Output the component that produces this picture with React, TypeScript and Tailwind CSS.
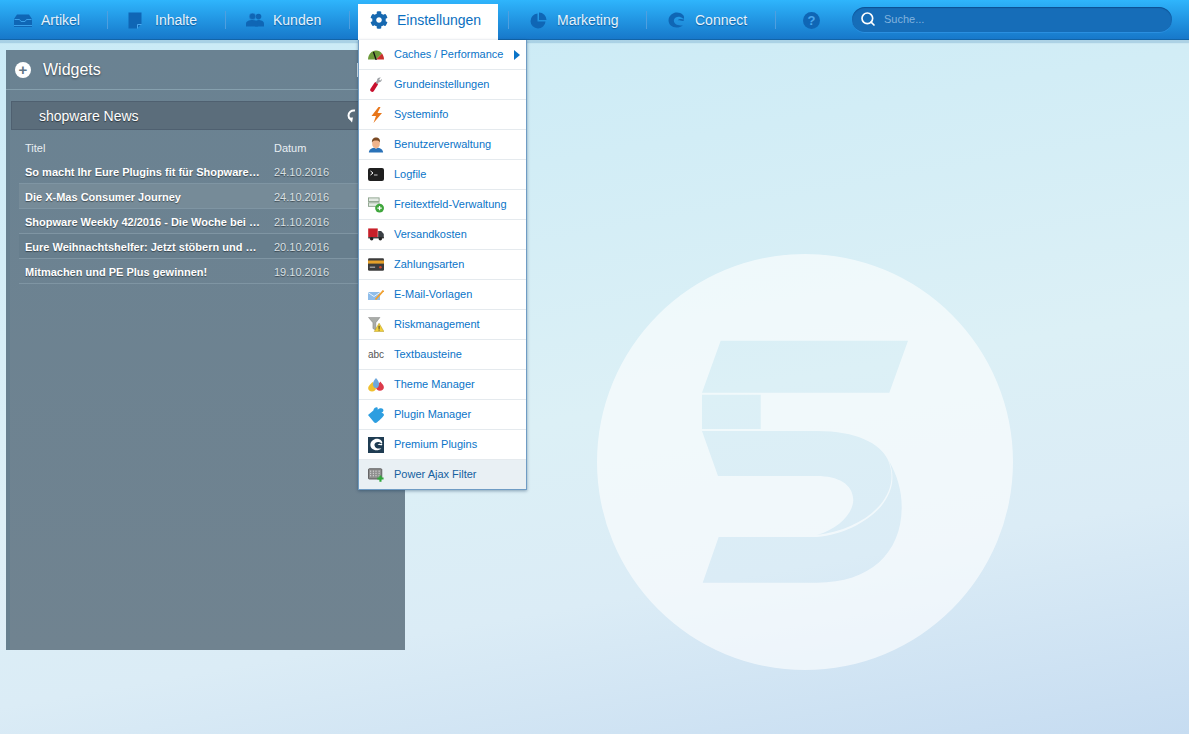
import { FaCog } from 'react-icons/fa';
import { Search } from 'lucide-react';

function TrayIcon() {
  return (
    <svg width="18" height="13" viewBox="0 0 18 13">
      <path d="M3 0.5H15L18 5V13H0V5Z" fill="#0f66b5" />
      <path d="M0.5 5.5H5.5L7 7.5H11L12.5 5.5H17.5" fill="none" stroke="#3aa0ea" strokeWidth="1" />
      <path d="M0 11.5H18" stroke="#3aa0ea" strokeWidth="1" />
    </svg>
  );
}

function DocIcon() {
  return (
    <svg width="14" height="17" viewBox="0 0 14 17">
      <path d="M0.5 0.5H13.5V12L9 16.5H0.5Z" fill="#0f66b5" />
      <path d="M13.5 12.5H9.5V16.5" fill="none" stroke="#4aa8ee" strokeWidth="1" />
    </svg>
  );
}

function PeopleIcon() {
  return (
    <svg width="18" height="14" viewBox="0 0 18 14">
      <circle cx="12.5" cy="3.6" r="2.8" fill="#0f66b5" />
      <path d="M9 13.5V10C9 8 11 7 12.5 7C14.5 7 18 8 18 10.5V13.5Z" fill="#0f66b5" />
      <circle cx="6.5" cy="3.4" r="3.2" fill="#0f66b5" stroke="#2a8ad8" strokeWidth="0.5" />
      <path d="M0 13.5V10.5C0 8.2 3 7 6.5 7C10 7 12 8.2 12 10.5V13.5Z" fill="#0f66b5" />
    </svg>
  );
}

function PieIcon() {
  return (
    <svg width="17" height="17" viewBox="0 0 17 17">
      <path d="M7.5 1.5A7.5 7.5 0 1 0 15.5 9.5H7.5Z" fill="#0f66b5" />
      <path d="M9 0.5A7.5 7.5 0 0 1 16.5 8H9Z" fill="#0f66b5" />
    </svg>
  );
}

const swirlPath =
  'M15 3C12.5 0.5 9 0 6 1C2.5 2.3 0.5 5 0.5 8.3C0.5 12.5 4 15.5 8.5 15.5C11 15.5 13.2 14.7 15 13.2C12.5 13.6 9 13.5 7 11.5C5.2 9.5 5.5 6.8 7.7 5.5C9.5 4.5 12.5 4.5 15 6.6C16.5 7.6 16.5 9 14.5 9C12.5 9 11 8 9.5 8.5C11 6.5 14 6.6 15.5 7.5C16.5 5.5 16 4 15 3Z';

function SwirlIcon() {
  return (
    <svg width="17" height="16" viewBox="0 0 17 16">
      <path d={swirlPath} fill="#0f66b5" />
    </svg>
  );
}

function HelpIcon() {
  return (
    <span className="flex h-[17px] w-[17px] items-center justify-center rounded-full bg-[#0f66b5] text-[13px] font-bold leading-none text-[#4aa8ee]">
      ?
    </span>
  );
}

const navItems = [
  { label: 'Artikel', icon: <TrayIcon />, box: 'w-[107px] pl-[14px]' },
  { label: 'Inhalte', icon: <DocIcon />, box: 'w-[117px] pl-[20px]' },
  { label: 'Kunden', icon: <PeopleIcon />, box: 'w-[123px] pl-[20px]' },
];

const navItemsRight = [
  { label: 'Marketing', icon: <PieIcon />, box: 'w-[137px] pl-[21px]' },
  { label: 'Connect', icon: <SwirlIcon />, box: 'w-[128px] pl-[21px]' },
];

function Separator() {
  return <span className="h-[18px] w-px shrink-0 bg-[#4f9fdf]" />;
}

function NavLink({ label, icon, box }: { label: string; icon: React.ReactNode; box: string }) {
  return (
    <a className={`flex h-full shrink-0 items-center pt-px ${box}`}>
      <span className="flex w-[27px] items-center">{icon}</span>
      <span className="text-[14px] text-[#e6f3fc] [text-shadow:0_1px_1px_rgba(0,60,120,0.6)]">{label}</span>
    </a>
  );
}

const GaugeIcon = (
  <svg width="16" height="10" viewBox="0 0 16 10">
    <path d="M0 9.5C0 4.5 3.5 0.5 8 0.5C10.5 0.5 12.5 1.6 14 3.4L8 9.5Z" fill="#6d9a3a" />
    <path d="M14 3.4C15.2 5 16 7 16 9.5H8Z" fill="#c9302c" />
    <path d="M5.5 2L8.2 10" stroke="#111" strokeWidth="1.3" />
  </svg>
);

const WrenchIcon = (
  <svg width="12" height="15" viewBox="0 0 12 15">
    <path d="M2.2 12.8L6 7" stroke="#c8102e" strokeWidth="4" strokeLinecap="round" />
    <path d="M6.5 6.5L8.5 3.5" stroke="#a0a4a8" strokeWidth="2.4" />
    <path d="M7 2.5C7.5 0.8 9.5 0 10.8 0.6L9.2 2.4L10.2 3.6L11.8 2C12.2 4 10.5 5.8 8.4 5Z" fill="#a0a4a8" />
  </svg>
);

const BoltIcon = (
  <svg width="11" height="16" viewBox="0 0 11 16">
    <path d="M7.5 0L0.5 9H5L2.5 16L11 6H6.5L9.5 0Z" fill="#e8761a" />
  </svg>
);

const UserIcon = (
  <svg width="16" height="16" viewBox="0 0 18 18">
    <path d="M1 17.5C1 14 4 12.5 6.5 12L9 13L11.5 12C14 12.5 17 14 17 17.5Z" fill="#2a72b8" />
    <ellipse cx="9" cy="7.5" rx="4.3" ry="5.5" fill="#f0b48c" />
    <path d="M4.5 6.5C4 2.5 6.5 0.5 9 0.5C12 0.5 14 2.5 13.5 6.5C13 4.5 11.5 4 9 4C6.5 4 5 4.5 4.5 6.5Z" fill="#7a4a24" />
  </svg>
);

const TerminalIcon = (
  <svg width="16" height="13" viewBox="0 0 16 13">
    <rect width="16" height="13" rx="2" fill="#1f1f1f" />
    <path d="M2.5 3L5 5L2.5 7" fill="none" stroke="#fff" strokeWidth="1" />
    <path d="M6 7H9.5" stroke="#ccc" strokeWidth="1" />
  </svg>
);

const FieldsIcon = (
  <svg width="17" height="16" viewBox="0 0 18 17">
    <rect x="0.5" y="0.5" width="12" height="4" fill="#e4ebe4" stroke="#8aa08a" />
    <rect x="0.5" y="6" width="12" height="4" fill="#e4ebe4" stroke="#8aa08a" />
    <circle cx="13" cy="12" r="5" fill="#3fa63c" />
    <path d="M13 9.5V14.5M10.5 12H15.5" stroke="#fff" strokeWidth="1.4" />
  </svg>
);

const TruckIcon = (
  <svg width="16" height="13" viewBox="0 0 18 15">
    <rect x="0" y="0.5" width="11" height="10" fill="#c8202a" />
    <path d="M11.5 3.5H15L18 7V11.5H11.5Z" fill="#3a3f44" />
    <rect x="0" y="10.5" width="18" height="1.5" fill="#333" />
    <circle cx="4" cy="12.5" r="2" fill="#222" />
    <circle cx="14" cy="12.5" r="2" fill="#222" />
  </svg>
);

const CardIcon = (
  <svg width="16" height="13" viewBox="0 0 18 14">
    <rect width="18" height="14" rx="1.5" fill="#3c3c3c" />
    <rect y="2.5" width="18" height="3.5" fill="#e5a02a" />
    <path d="M2 10H8" stroke="#ddd" strokeWidth="1" />
    <circle cx="14" cy="10" r="1.4" fill="#d9472b" />
  </svg>
);

const MailIcon = (
  <svg width="16" height="10" viewBox="0 0 16 10">
    <rect x="0" y="2" width="12" height="8" fill="#8fbdea" />
    <path d="M0 2.5L6 6.5L12 2.5" fill="none" stroke="#e6f2fb" strokeWidth="1" />
    <path d="M7.5 9.5L15.5 0.5" stroke="#f0a030" strokeWidth="1.8" />
  </svg>
);

const FunnelIcon = (
  <svg width="16" height="15" viewBox="0 0 18 17">
    <path d="M0.5 0.5H13.5L8.8 6.5V15L5.5 13V6.5Z" fill="#a9aca8" stroke="#777" strokeWidth="0.5" />
    <path d="M12.5 7L18 16.5H7Z" fill="#f3d13c" stroke="#a88a10" strokeWidth="0.5" />
    <path d="M12.5 10V13.5M12.5 14.2V15.4" stroke="#222" strokeWidth="1" />
  </svg>
);

const AbcIcon = <span className="text-[10px] leading-none text-[#555]">abc</span>;

const DropsIcon = (
  <svg width="16" height="14" viewBox="0 0 18 16">
    <path d="M5 4.5C7 7 9 9 9 11.5C9 14 7 15.5 4.5 15.5C2 15.5 0 14 0 11.5C0 9 3 7 5 4.5Z" fill="#f0c030" />
    <path d="M14 4C16 7 18 8 18 10.5C18 13 16 14.5 13.5 14.5C11 14.5 9 13 9 10.5C9 8 12 7 14 4Z" fill="#dc3a4a" />
    <path d="M9 0C11 2.5 12.5 4.5 12.5 7C12.5 9.5 11 11.5 9 11.5C7 11.5 5.5 9.5 5.5 7C5.5 4.5 7 2.5 9 0Z" fill="#6fa8dc" />
  </svg>
);

const PuzzleIcon = (
  <svg width="16" height="16" viewBox="0 0 18 18">
    <path d="M0 9L6 4C6.5 1 9 0 10.5 0.5C11 0.5 11 3 11 3C13 1 16 1 17 2.5C18 4 17 6 15 6.5C16 7 18 7 18 9C18 10 14 14 10 17.5C9 18 8 18 7 17.5Z" fill="#2d9ee0" />
  </svg>
);

const PremiumIcon = (
  <span className="flex h-4 w-4 items-center justify-center bg-[#1f3c52]">
    <svg width="13" height="13" viewBox="0 0 17 16">
      <path d={swirlPath} fill="#fff" />
    </svg>
  </span>
);

const FilterIcon = (
  <svg width="16" height="14" viewBox="0 0 18 15">
    <rect x="0.5" y="0.5" width="15" height="11.5" rx="1" fill="#8f8f8f" stroke="#555" />
    <path d="M3 2.5V10M6 2.5V10M9 2.5V10M12.5 2.5V10" stroke="#e4e4e4" strokeWidth="1" strokeDasharray="1.5 1" />
    <path d="M14 8V15M10.5 11.5H17.5" stroke="#2fa83a" strokeWidth="2.4" />
  </svg>
);

function RefreshIcon() {
  return (
    <svg width="16" height="14" viewBox="0 0 16 14" className="ml-auto">
      <path d="M8 1.5C4 1 1.5 3.5 1.5 6.5C1.5 8 2 9.2 3.2 10" fill="none" stroke="#fff" strokeWidth="2" />
      <path d="M1 8.8L6 8.5L5 13.5Z" fill="#fff" />
    </svg>
  );
}

const menuItems = [
  { label: 'Caches / Performance', icon: GaugeIcon, arrow: true },
  { label: 'Grundeinstellungen', icon: WrenchIcon },
  { label: 'Systeminfo', icon: BoltIcon },
  { label: 'Benutzerverwaltung', icon: UserIcon },
  { label: 'Logfile', icon: TerminalIcon },
  { label: 'Freitextfeld-Verwaltung', icon: FieldsIcon },
  { label: 'Versandkosten', icon: TruckIcon },
  { label: 'Zahlungsarten', icon: CardIcon },
  { label: 'E-Mail-Vorlagen', icon: MailIcon },
  { label: 'Riskmanagement', icon: FunnelIcon },
  { label: 'Textbausteine', icon: AbcIcon },
  { label: 'Theme Manager', icon: DropsIcon },
  { label: 'Plugin Manager', icon: PuzzleIcon },
  { label: 'Premium Plugins', icon: PremiumIcon },
  { label: 'Power Ajax Filter', icon: FilterIcon, hover: true },
];

const news = [
  { title: 'So macht Ihr Eure Plugins fit für Shopware…', date: '24.10.2016', bg: '' },
  { title: 'Die X-Mas Consumer Journey', date: '24.10.2016', bg: 'bg-[#768b98]' },
  { title: 'Shopware Weekly 42/2016 - Die Woche bei …', date: '21.10.2016', bg: '' },
  { title: 'Eure Weihnachtshelfer: Jetzt stöbern und …', date: '20.10.2016', bg: 'bg-[#677e8d]' },
  { title: 'Mitmachen und PE Plus gewinnen!', date: '19.10.2016', bg: '' },
];

function SettingsMenu() {
  return (
    <ul className="absolute left-0 top-full z-30 w-[169px] border-x border-[#6f9cc4] bg-white shadow-[0_1px_3px_rgba(0,40,80,0.4)]">
      {menuItems.map((item) => (
        <li
          key={item.label}
          className={`flex h-[30px] items-center border-b pl-[9px] ${
            item.hover ? 'border-[#6f9cc4] bg-[#e9f0f4] text-[#14609f]' : 'border-[#e5eaee] text-[#0a74c8]'
          }`}
        >
          <span className="flex w-4 items-center justify-center">{item.icon}</span>
          <span className="ml-[10px] text-[11px]">{item.label}</span>
          {item.arrow && (
            <span className="ml-auto mr-[6px] h-0 w-0 border-y-[5px] border-l-[6px] border-y-transparent border-l-[#0a74c8]" />
          )}
        </li>
      ))}
    </ul>
  );
}

function Header() {
  return (
    <header className="relative z-20 flex h-10 items-center border-b border-[#1264a8] bg-gradient-to-b from-[#2fb5fc] to-[#1778ca] shadow-[0_3px_1px_rgba(90,150,190,0.3)]">
      {navItems.map((item, i) => (
        <div key={item.label} className="flex h-full items-center">
          {i > 0 && <Separator />}
          <NavLink {...item} />
        </div>
      ))}
      <Separator />
      <div className="relative ml-2 mt-1 flex h-9 w-[140px] shrink-0 items-center self-start bg-white pb-1 pl-3">
        <span className="flex w-[27px] items-center">
          <FaCog size={18} color="#1668b0" />
        </span>
        <span className="text-[14px] text-[#0b6fc0]">Einstellungen</span>
        <SettingsMenu />
      </div>
      <div className="ml-[10px] flex h-full items-center">
        {navItemsRight.map((item) => (
          <div key={item.label} className="flex h-full items-center">
            <Separator />
            <NavLink {...item} />
          </div>
        ))}
        <Separator />
        <span className="pl-[27px] pt-px">
          <HelpIcon />
        </span>
      </div>
      <label className="ml-auto mr-[17px] flex h-[26px] w-[320px] items-center rounded-full border-b border-[#2a8fe0] bg-[#166db8] pl-2 shadow-[inset_0_1px_1px_rgba(0,50,110,0.5)]">
        <Search size={16} strokeWidth={2.5} className="text-white" />
        <span className="ml-2 pt-px text-[11px] text-[#82b3de]">Suche...</span>
      </label>
    </header>
  );
}

function WidgetPanel() {
  return (
    <section className="h-[600px] w-[399px] bg-gradient-to-b from-[#6a8292] to-[#708390] text-white shadow-[inset_4px_0_0_#66808f]">
      <div className="flex h-10 items-center border-b border-[#86a0ae] pl-[9px] pr-[34px]">
        <span className="flex h-4 w-4 items-center justify-center rounded-full bg-white">
          <span className="text-[15px] font-bold leading-none text-[#5f7585]">+</span>
        </span>
        <h2 className="ml-3 text-[16px] [text-shadow:0_1px_2px_rgba(0,0,0,0.5)]">Widgets</h2>
        <span className="ml-auto h-[14px] w-[14px] bg-[#e2ecf1]" />
      </div>
      <div className="mx-[5px] mt-[11px] flex h-[29px] items-center border border-[#4f6070] bg-[#5b6d7b] pl-[27px] pr-[36px]">
        <span className="pt-px text-[14px] [text-shadow:0_1px_1px_rgba(0,0,0,0.5)]">shopware News</span>
        <RefreshIcon />
      </div>
      <div className="ml-[13px] mr-[9px]">
        <div className="flex h-[29px] items-end pb-[3px] pl-[6px] text-[11px] text-[#e8eef2]">
          <span className="w-[249px]">Titel</span>
          <span>Datum</span>
        </div>
        {news.map((row) => (
          <div
            key={row.title}
            className={`flex h-[25px] items-center border-b border-[#7f95a3] pl-[6px] pt-[3px] text-[11px] [text-shadow:0_1px_1px_rgba(0,0,0,0.45)] ${row.bg}`}
          >
            <span className="w-[249px] font-bold">{row.title}</span>
            <span className="text-[#d9e0e5]">{row.date}</span>
          </div>
        ))}
      </div>
    </section>
  );
}

function Watermark() {
  return (
    <svg className="absolute left-[597px] top-[254px]" width="416" height="416" viewBox="597 254 416 416">
      <path
        fill="#ffffff"
        fillOpacity="0.6"
        fillRule="evenodd"
        d="M597 462A208 208 0 1 0 1013 462A208 208 0 1 0 597 462Z
           M720.7 340.7H908L889.3 392.7H702Z
           M702 394.7H760.7V429H702Z
           M702 431H817C856 431 880 443 888 460C895 477 891 492 880 505C866 521 843 532 817 535C838 529 853 514 853.3 500C853 484 838 476 817 476H718Z
           M718.7 537H817C844 534.5 867 522 881 506.5C892 493 896 478 889 461C897 475 901.7 490 901.7 507C901.7 553 870 582.7 817 582.7H702.7Z"
      />
    </svg>
  );
}

export default function App() {
  return (
    <div className="relative h-[734px] w-[1189px] overflow-hidden bg-[linear-gradient(170deg,#c8eaf6_0%,#dcf0f6_55%,#dbecf6_75%,#c6dcf1_100%)] font-['Liberation_Sans',Arial,sans-serif]">
      <Watermark />
      <Header />
      <main className="relative pl-[6px] pt-[10px]">
        <WidgetPanel />
      </main>
    </div>
  );
}
